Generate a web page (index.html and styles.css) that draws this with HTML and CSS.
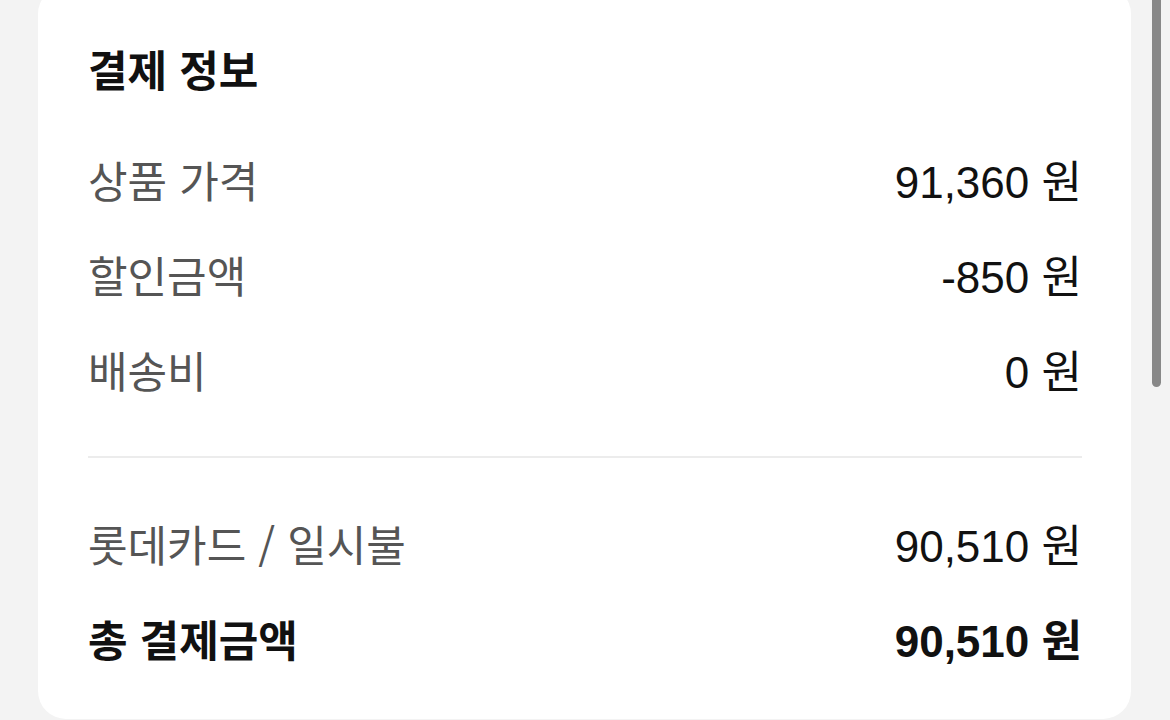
FILE: index.html
```html
<!DOCTYPE html>
<html lang="ko">
<head>
<meta charset="utf-8">
<title>결제 정보</title>
<link rel="stylesheet" href="styles.css">
</head>
<body>
<main class="page">
  <section class="card">
    <h2 class="title">결제 정보</h2>
    <div class="rows">
      <div class="row"><span class="label">상품 가격</span><span class="value">91,360 원</span></div>
      <div class="row"><span class="label">할인금액</span><span class="value">-850 원</span></div>
      <div class="row"><span class="label">배송비</span><span class="value">0 원</span></div>
    </div>
    <hr class="divider">
    <div class="rows">
      <div class="row"><span class="label">롯데카드 / 일시불</span><span class="value">90,510 원</span></div>
      <div class="row total"><span class="label">총 결제금액</span><span class="value">90,510 원</span></div>
    </div>
  </section>
</main>
<div class="scrollbar"></div>
</body>
</html>
```

FILE: styles.css
```css
html, body {
  margin: 0;
  padding: 0;
  background: #f3f3f3;
  height: 100%;
  overflow: hidden;
}
body {
  font-family: "Liberation Sans", "Noto Sans CJK KR", sans-serif;
  color: #111;
}
.page {
  padding: 0 39px 0 38px;
}
.card {
  margin-top: -14px;
  background: #fff;
  border-radius: 28px;
  padding: 54px 49px 34px 50px;
}
.title {
  margin: 0;
  font-family: "Noto Sans CJK KR", sans-serif;
  font-weight: 700;
  font-size: 43px;
  letter-spacing: 0;
  line-height: 56px;
  color: #111;
}
.rows {
  display: flex;
  flex-direction: column;
}
.title + .rows {
  margin-top: 35px;
}
.row {
  display: flex;
  justify-content: space-between;
  align-items: center;
  height: 95px;
}
.label {
  font-family: "Noto Sans CJK KR", sans-serif;
  font-size: 43px;
  letter-spacing: 0;
  color: #555;
}
.value {
  font-size: 44px;
  letter-spacing: 0;
  color: #111;
}
.total .label {
  font-weight: 700;
  color: #111;
}
.total .value {
  font-weight: 700;
}
.divider {
  border: 0;
  height: 2px;
  background: #ececec;
  margin: 40px 0 37px;
}
.scrollbar {
  position: fixed;
  top: -6px;
  left: 1152px;
  width: 9px;
  height: 393px;
  border-radius: 5px;
  background: #888;
}
```
